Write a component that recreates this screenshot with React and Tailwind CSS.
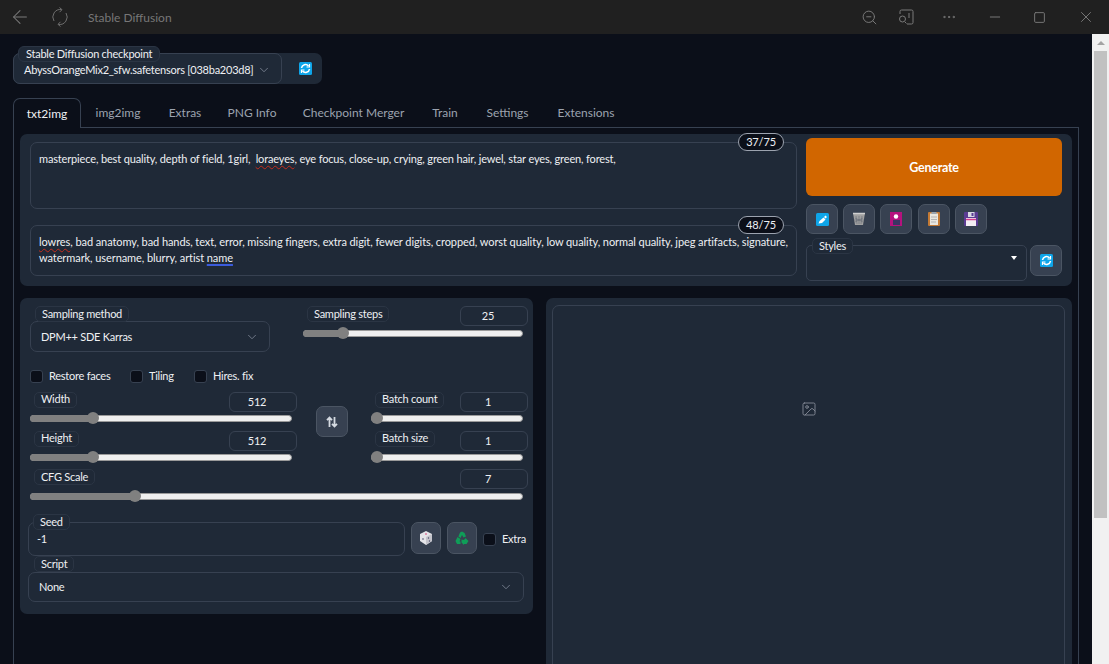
import React from "react";
import { ArrowLeft, ZoomOut, MoreHorizontal, Minus, Square, X, ChevronDown, Image as ImageIcon } from "lucide-react";

const Blue = ({ kind = "refresh" }) => (
  <svg width="13" height="13" viewBox="0 0 13 13">
    <rect width="13" height="13" rx="1.5" fill="#0ea5e9" />
    {kind === "refresh" ? (
      <g fill="none" stroke="#fff" strokeWidth="1.6">
        <path d="M2.5 6a4 4 0 0 1 7-2" />
        <path d="M10.5 7a4 4 0 0 1-7 2" />
        <path d="M10.5 2v3H7.5" strokeWidth="1.2" />
        <path d="M2.5 11V8h3" strokeWidth="1.2" />
      </g>
    ) : (
      <path d="M2.5 10.5l1-2.5 4-3.5 2 2-3.5 3.5zM8 4l1.5-1.5 1.5 1.5L9.5 5.5z" fill="#fff" />
    )}
  </svg>
);

const Trash = () => (
  <svg width="14" height="14" viewBox="0 0 14 14">
    <path d="M1 1h12l-2 12H3z" fill="#a0a0a0" />
    <path d="M1 1.5h12" stroke="#cfcfcf" strokeWidth="1.5" />
    <path d="M4 4l1 8M7 4v8M10 4l-1 8M3 6l8 4M11 6l-8 4M2.5 8h9" stroke="#666c75" strokeWidth=".6" />
  </svg>
);
const Pin = () => (
  <svg width="12" height="14" viewBox="0 0 12 14">
    <rect width="12" height="14" fill="#b5127e" />
    <circle cx="6" cy="4.5" r="2.2" fill="#fff" />
    <rect x="3" y="8" width="7" height="5" fill="#3a3563" />
  </svg>
);
const Clip = () => (
  <svg width="12" height="14" viewBox="0 0 12 14">
    <rect width="12" height="14" rx="1" fill="#c47a35" />
    <rect x="2" y="1.5" width="8" height="11.5" fill="#e9e6df" />
    <rect x="3.5" y="0" width="5" height="2" fill="#9aa3ad" />
    <path d="M3 5h6M3 7.5h6M3 10h5" stroke="#b3b3b3" />
  </svg>
);
const Floppy = () => (
  <svg width="14" height="14" viewBox="0 0 14 14">
    <rect width="14" height="14" rx="1" fill="#5b3c93" />
    <rect x="4" y="0" width="6.5" height="5" fill="#d9d9e3" />
    <rect x="7.5" y="1" width="2" height="3" fill="#5b3c93" />
    <rect x="2" y="6" width="10" height="8" fill="#f3eef3" />
    <path d="M2 7.5h10" stroke="#d63b8f" strokeWidth="1.5" />
  </svg>
);
const Dice = () => (
  <svg width="14" height="14" viewBox="0 0 14 14">
    <path d="M7 0l6 3v7l-6 4-6-4V3z" fill="#e4e4e8" />
    <path d="M7 6l6-3v7l-6 4z" fill="#c4c4cb" />
    <circle cx="7" cy="3" r=".8" fill="#d6336c" />
    <circle cx="4" cy="8" r=".8" fill="#4a4a68" />
    <circle cx="9.5" cy="7" r=".7" fill="#4a4a68" />
    <circle cx="10.5" cy="10" r=".7" fill="#4a4a68" />
  </svg>
);
const Recycle = () => (
  <svg width="14" height="14" viewBox="0 0 14 14" fill="#0f9d58">
    <path d="M7 0.5l2.6 1.6L11 5.5 8.5 6.5 7 4 5.5 7 3.4 5.6 5 1.5z" />
    <path d="M0.5 10l2-4 3 2-1 2.5h1V13H2z" />
    <path d="M6.5 8.5l2 .5 1.5-1 .5-1 3 3-2 3H9v1L6.5 11.5z" />
  </svg>
);
const Swap = () => (
  <svg width="12" height="12" viewBox="0 0 12 12" fill="none" stroke="#d5dae1" strokeWidth="1.8">
    <path d="M3.5 11V2M1 4.2l2.5-2.7L6 4.2M8.5 1v9M6 7.8l2.5 2.7L11 7.8" />
  </svg>
);
const Reload = () => (
  <svg width="20" height="20" viewBox="0 0 20 20" fill="none" stroke="#6f6f6f" strokeWidth="1">
    <path d="M4 14A7.5 7.5 0 0 1 11.5 2.6M16 6a7.5 7.5 0 0 1-7.5 11.4" />
    <path d="M9.5 0.5l2.5 2.2-2.5 2.5M10.5 14.8L8 17.3l2.5 2.2" />
  </svg>
);
const Tablet = () => (
  <svg width="16" height="16" viewBox="0 0 16 16" fill="none" stroke="#7a7a7a" strokeWidth="1">
    <path d="M2 5V2.5A1.5 1.5 0 0 1 3.5 1h10A1.5 1.5 0 0 1 15 2.5v11a1.5 1.5 0 0 1-1.5 1.5H9" />
    <path d="M11 4v5" />
    <circle cx="4.5" cy="10" r="3" />
    <path d="M7 13l1.5 1.5" />
  </svg>
);

const Label = ({ children, className = "" }) => (
  <span className={`inline-flex h-[16px] items-center rounded-[5px] border border-[#2b3544] bg-[#1f2937] px-[6px] pb-[2px] text-[11px] leading-none text-[#eef0f3] ${className}`}>
    {children}
  </span>
);
const Num = ({ children, className = "" }) => (
  <div className={`flex h-[20px] w-[68px] items-center justify-center rounded-[6px] border border-[#374151] pr-[12px] text-[11px] text-[#eef0f3] ${className}`}>{children}</div>
);

const Slider = ({ label, value, pct, className = "", trackClass = "", labelClass = "" }) => (
  <div className={className}>
    <div className="flex h-[20px] items-center justify-between pl-[4px]">
      <Label className={`mt-[-4px] ${labelClass}`}>{label}</Label>
      <Num>{value}</Num>
    </div>
    <div className={`relative mt-[1px] flex h-[12px] w-full items-center ${trackClass}`}>
      <div className="h-[7px] w-full rounded-full border border-[#9a9a9a] bg-[#efefef]" />
      <div className="absolute left-0 h-[7px] rounded-l-full bg-[#808080]" style={{ width: `${pct}%` }} />
      <div className="absolute h-[12px] w-[12px] -translate-x-1/2 rounded-full bg-[#808080]" style={{ left: `${pct}%` }} />
    </div>
  </div>
);

const Check = ({ label, className = "" }) => (
  <div className={`flex items-center gap-[6px] text-[11px] text-[#eef0f3] ${className}`}>
    <span className="h-[13px] w-[13px] rounded-[3px] border border-[#374151] bg-[#0b0f19]" />
    {label}
  </div>
);

const Tool = ({ children, className = "" }) => (
  <button className={`flex items-center justify-center rounded-[7px] border border-[#4b5563] bg-[#374151] ${className}`}>{children}</button>
);

const tabs = [["img2img", "w-[74px]"], ["Extras", "w-[60px]"], ["PNG Info", "w-[74px]"], ["Checkpoint Merger", "w-[129px]"], ["Train", "w-[54px]"], ["Settings", "w-[71px]"], ["Extensions", "w-[86px]"]];

const Sq = ({ children }) => <span className="underline decoration-[#c42b1c] decoration-wavy decoration-1 underline-offset-2 [text-decoration-skip-ink:none]">{children}</span>;

const Chev = () => <ChevronDown size={14} strokeWidth={1.5} className="shrink-0 text-[#7b8494]" />;

export default function App() {
  return (
    <div className="flex h-[664px] w-[1109px] flex-col overflow-hidden bg-[#0b0f19] tracking-[-0.25px]" style={{ fontFamily: 'Lato, sans-serif' }}>
      <header className="flex h-[34px] shrink-0 items-center bg-[#202020] text-[#777777]">
        <ArrowLeft size={22} strokeWidth={1.1} className="ml-[9px] text-[#7a7a7a]" />
        <span className="ml-[19px]"><Reload /></span>
        <span className="ml-[18px] pt-[1px] text-[12px] tracking-normal">Stable Diffusion</span>
        <div className="ml-auto flex items-center">
          <ZoomOut size={17} strokeWidth={1.4} className="mr-[20px]" />
          <Tablet />
          <MoreHorizontal size={16} strokeWidth={1.5} className="ml-[27px]" />
          <Minus size={16} strokeWidth={1.5} className="ml-[30px]" />
          <Square size={13} strokeWidth={1.8} className="ml-[30px]" />
          <X size={18} strokeWidth={1.3} className="ml-[31px] mr-[14px]" />
        </div>
      </header>

      <div className="flex min-h-0 flex-1">
        <main className="min-w-0 flex-1 pl-[13px] pr-[13px]">
          <div className="relative mt-[19px] flex h-[31px] w-[309px] items-center rounded-[7px] bg-[#1f2937]">
            <Label className="absolute left-[5px] top-[-7px] !rounded-[6px] !px-[7px]">Stable Diffusion checkpoint</Label>
            <div className="flex h-[31px] w-[269px] items-center justify-between whitespace-nowrap rounded-[7px] border border-[#374151] pl-[10px] pr-[10px] pt-[3px] text-[11px] text-[#eef0f3]">
              AbyssOrangeMix2_sfw.safetensors [038ba203d8]
              <Chev />
            </div>
            <span className="ml-[17px]"><Blue /></span>
          </div>

          <nav className="mt-[13px] flex h-[31px] border-b border-[#374151] pt-[1px] text-[12px] tracking-normal text-[#9ca3af]">
            <div className="flex h-[30px] w-[68px] items-center justify-center rounded-t-[7px] border border-b-0 border-[#374151] bg-[#0b0f19] text-[#eef0f3]">txt2img</div>
            {tabs.map(([t, w]) => (
              <div key={t} className={`flex items-center justify-center ${w}`}>{t}</div>
            ))}
          </nav>

          <section className="h-[540px] border-x border-[#374151] px-[6px] pt-[6px]">
            <div className="flex h-[152px] gap-[9px] rounded-[7px] bg-[#1f2937] px-[10px]">
              <div className="flex w-[767px] flex-col gap-[16px] pt-[8px]">
                <div className="relative h-[67px] rounded-[7px] border border-[#374151] px-[8px] pt-[8px] text-[11px] leading-[16px] tracking-[-0.15px] text-[#eef0f3]">
                  masterpiece, best quality, depth of field, 1girl,&nbsp; <Sq>loraeyes</Sq>, eye focus, close-up, crying, green hair, jewel, star eyes, green, forest,
                  <span className="absolute right-[12px] top-[-10px] flex h-[18px] w-[46px] items-center justify-center rounded-full border border-[#9ca3af] bg-[#0b0f19] text-[11px]">37/75</span>
                </div>
                <div className="relative h-[51px] whitespace-nowrap rounded-[7px] border border-[#374151] px-[8px] pt-[8px] text-[11px] leading-[16px] tracking-[-0.08px] text-[#eef0f3]">
                  <p className="m-0"><Sq>lowres</Sq>, bad anatomy, bad hands, text, error, missing fingers, extra digit, fewer digits, cropped, worst quality, low quality, normal quality, jpeg artifacts, signature,</p>
                  <p className="m-0">watermark, username, blurry, artist <span className="underline decoration-[#3b5bdb] decoration-2 underline-offset-2">name</span></p>
                  <span className="absolute right-[12px] top-[-10px] flex h-[18px] w-[46px] items-center justify-center rounded-full border border-[#9ca3af] bg-[#0b0f19] text-[11px]">48/75</span>
                </div>
              </div>
              <div className="flex w-[256px] flex-col pt-[4px]">
                <button className="flex h-[58px] w-full items-center justify-center rounded-[6px] bg-[#d16600] pt-[3px] text-[12.5px] font-bold text-white">Generate</button>
                <div className="mt-[8px] flex gap-[5px]">
                  <Tool className="h-[30px] w-[32px]"><Blue kind="edit" /></Tool>
                  <Tool className="h-[30px] w-[32px]"><Trash /></Tool>
                  <Tool className="h-[30px] w-[32px]"><Pin /></Tool>
                  <Tool className="ml-[1px] h-[30px] w-[32px]"><Clip /></Tool>
                  <Tool className="h-[30px] w-[32px]"><Floppy /></Tool>
                </div>
                <div className="mt-[11px] flex gap-[3px]">
                  <div className="relative h-[36px] w-[221px] rounded-[5px] border border-[#374151]">
                    <Label className="absolute left-[5px] top-[-8px]">Styles</Label>
                    <span className="absolute right-[9px] top-[10px] h-0 w-0 border-x-[3.5px] border-t-[4px] border-x-transparent border-t-white" />
                  </div>
                  <Tool className="h-[31px] w-[32px]"><Blue /></Tool>
                </div>
              </div>
            </div>

            <div className="mt-[12px] flex gap-[13px]">
              <div className="h-[316px] w-[513px] shrink-0 rounded-[7px] bg-[#1f2937] pl-[10px] pr-[5px] pt-[8px]">
                <div className="flex h-[46px]">
                  <div className="relative w-[240px] pt-[15px]">
                    <Label className="absolute left-[5px] top-0 z-10">Sampling method</Label>
                    <div className="flex h-[31px] items-center justify-between rounded-[7px] border border-[#374151] pl-[10px] pr-[10px] pt-[1px] text-[11px] text-[#eef0f3]">
                      DPM++ SDE Karras
                      <Chev />
                    </div>
                  </div>
                  <Slider label="Sampling steps" value="25" pct={18} className="ml-[33px] w-[225px]" trackClass="!w-[220px]" />
                </div>
                <div className="mt-[18px] flex h-[13px] items-center">
                  <Check label="Restore faces" className="w-[100px]" />
                  <Check label="Tiling" className="w-[64px]" />
                  <Check label="Hires. fix" />
                </div>
                <div className="mt-[9px] flex">
                  <div className="flex w-[267px] flex-col gap-[7px]">
                    <Slider label="Width" value="512" pct={24} labelClass="!mt-[-5px]" trackClass="!w-[262px] !mt-0" />
                    <Slider label="Height" value="512" pct={24} labelClass="!mt-[-5px]" trackClass="!w-[262px] !mt-0" />
                  </div>
                  <Tool className="ml-[19px] mt-[14px] h-[31px] w-[32px]"><Swap /></Tool>
                  <div className="ml-[23px] flex w-[157px] flex-col gap-[7px]">
                    <Slider label="Batch count" value="1" pct={4} labelClass="!mt-[-5px]" trackClass="!w-[152px] !mt-0" />
                    <Slider label="Batch size" value="1" pct={4} labelClass="!mt-[-5px]" trackClass="!w-[152px] !mt-0" />
                  </div>
                </div>
                <Slider label="CFG Scale" value="7" pct={21.2} className="mt-[6px] w-[498px]" trackClass="!w-[493px]" />
                <div className="relative ml-[-2px] mt-[20px] flex h-[34px]">
                  <div className="relative h-[34px] w-[377px] rounded-[7px] border border-[#374151] pl-[8px] pt-[8px] text-[11px] text-[#eef0f3]">
                    <Label className="absolute left-[4px] top-[-9px]">Seed</Label>
                    -1
                  </div>
                  <Tool className="ml-[6px] h-[32px] w-[30px]"><Dice /></Tool>
                  <Tool className="ml-[6px] h-[32px] w-[30px]"><Recycle /></Tool>
                  <Check label="Extra" className="ml-[6px] h-[34px] pt-[1px]" />
                </div>
                <div className="relative ml-[-2px] mt-[16px] flex h-[30px] w-[496px] items-center justify-between rounded-[7px] border border-[#374151] pl-[10px] pr-[10px] text-[11px] text-[#eef0f3]">
                  <Label className="absolute left-[5px] top-[-17px]">Script</Label>
                  None
                  <Chev />
                </div>
              </div>
              <div className="h-[400px] w-[526px] rounded-t-[7px] bg-[#1f2937] px-[6px] pt-[7px]">
                <div className="flex h-[500px] w-[513px] items-start justify-center rounded-[7px] border border-[#374151] pt-[95px]">
                  <ImageIcon size={16} strokeWidth={1.25} className="text-[#8b929d]" />
                </div>
              </div>
            </div>
          </section>
        </main>
        <aside className="relative w-[17px] shrink-0 bg-[#f1f1f1]">
          <span className="absolute left-[5px] top-[7px] h-0 w-0 border-x-[4px] border-b-[4px] border-x-transparent border-b-[#a3a3a3]" />
          <div className="mx-auto mt-[17px] h-[467px] w-[13px] bg-[#c1c1c1]" />
        </aside>
      </div>
    </div>
  );
}
